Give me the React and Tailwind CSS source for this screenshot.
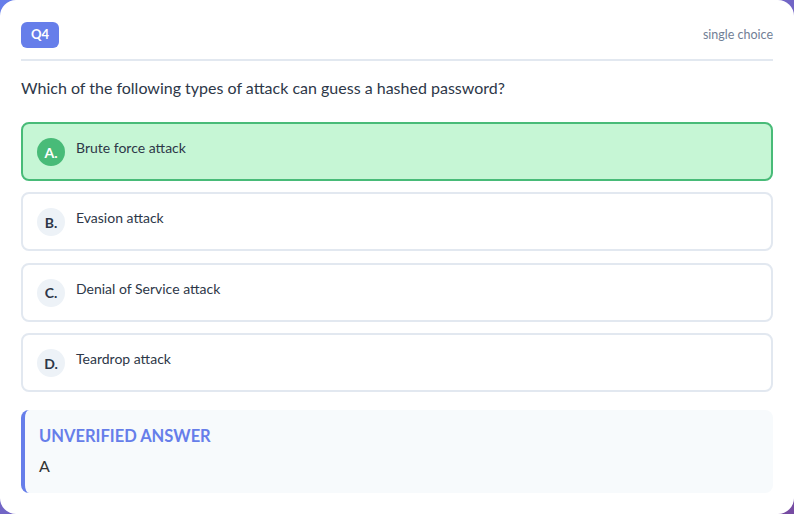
import React from "react";

const options = [
  { letter: "A.", text: "Brute force attack", correct: true },
  { letter: "B.", text: "Evasion attack" },
  { letter: "C.", text: "Denial of Service attack" },
  { letter: "D.", text: "Teardrop attack" },
];

export default function App() {
  return (
    <div
      className="w-[794px] h-[514px] bg-gradient-to-br from-[#667eea] to-[#764ba2]"
      style={{ fontFamily: 'Lato, "Noto Sans", sans-serif' }}
    >
      <div className="h-full bg-white rounded-[16px] px-[21px] pt-[22px]">
        <div className="flex items-center justify-between pb-[11px] border-b-2 border-[#e2e8f0]">
          <span className="h-[26px] px-[10px] flex items-center rounded-[6px] bg-[#667eea] text-white text-[13px] font-bold">
            Q4
          </span>
          <span className="text-[12.5px] text-[#718096]">single choice</span>
        </div>
        <p className="mt-[15px] text-[16px] leading-[24px] text-[#2d3748]">
          Which of the following types of attack can guess a hashed password?
        </p>
        <div className="mt-[22px] flex flex-col gap-[11.4px]">
          {options.map((o) => (
            <div
              key={o.letter}
              className={
                o.correct
                  ? "h-[59px] flex items-start border-2 border-[#48bb78] bg-[#c6f6d5] rounded-[8px] pl-[14px] pt-[14px]"
                  : "h-[59px] flex items-start border-2 border-[#e2e8f0] bg-white rounded-[8px] pl-[14px] pt-[14px]"
              }
            >
              <span
                className={
                  o.correct
                    ? "w-[28px] h-[28px] rounded-full bg-[#48bb78] text-white text-[14px] font-bold flex items-center justify-center shrink-0"
                    : "w-[28px] h-[28px] rounded-full bg-[#edf2f7] text-[#2d3748] text-[14px] font-bold flex items-center justify-center shrink-0"
                }
              >
                {o.letter}
              </span>
              <span className="ml-[11px] -mt-[2px] text-[14px] leading-[24px] text-[#2d3748]">
                {o.text}
              </span>
            </div>
          ))}
        </div>
        <div className="mt-[18px] h-[83px] bg-[#f7fafc] border-l-4 border-[#667eea] rounded-[8px] pl-[14px] pt-[14px]">
          <div className="text-[16.5px] leading-[24px] font-bold text-[#667eea]">UNVERIFIED ANSWER</div>
          <div className="mt-[6px] text-[16px] leading-[24px] text-[#333333]">A</div>
        </div>
      </div>
    </div>
  );
}
